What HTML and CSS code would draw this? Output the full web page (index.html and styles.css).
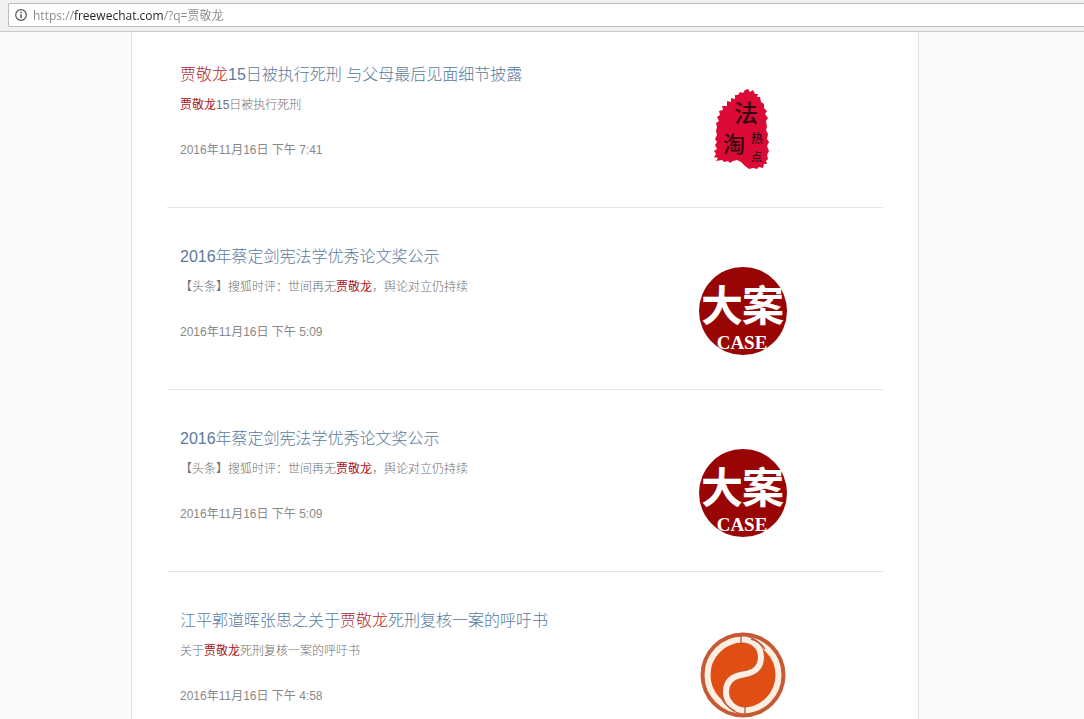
FILE: index.html
```html
<!DOCTYPE html>
<html lang="zh-CN">
<head>
<meta charset="utf-8">
<title>贾敬龙</title>
<link rel="stylesheet" href="styles.css">
</head>
<body>
<header class="toolbar">
  <label class="address">
    <svg class="info" viewBox="0 0 12 12" aria-label="网址"><circle cx="6" cy="6" r="5.3" fill="none" stroke="#555" stroke-width="1.2"/><path d="M6 5.2v3.8M6 2.8v1.4" stroke="#555" stroke-width="1.5"/></svg>
    <input class="url" type="text" value="https://freewechat.com/?q=贾敬龙">
  </label>
</header>
<div class="viewport">
<main class="panel">
  <article class="result">
    <div class="text">
      <h2 class="title"><a href="#"><em>贾敬龙</em>15日被执行死刑 与父母最后见面细节披露</a></h2>
      <p class="snippet"><em>贾敬龙</em>15日被执行死刑</p>
      <time class="date">2016年11月16日 下午 7:41</time>
    </div>
    <svg class="logo" viewBox="0 0 88 88">
      <path d="M39 10L41 7L44 8L46 5L49 4L51 7L54 5L56 9L59 9L58 12L61 12L62 17L65 19L65 23L68 26L66 29L69 33L67 36L68 42L67 45L69 49L68 54L70 57L68 61L70 66L68 70L69 74L67 76L68 79L65 79L64 83L60 82L58 84L54 83L50 84L46 81L42 77L38 75L34 76L31 78L29 76L25 77L23 75L17 76L19 73L15 72L17 69L15 66L18 64L16 60L18 57L16 54L18 50L17 46L18 42L17 38L20 36L18 32L21 30L20 26L24 25L23 21L28 21L28 16L32 17L32 13L36 14L36 10Z" fill="#dc0a36"/>
      <g class="brush"><text x="35" y="37" font-size="24">法</text><text x="24" y="67" font-size="22">淘</text><text x="52" y="58" font-size="12">热</text><text x="52" y="76" font-size="11">点</text></g>
    </svg>
  </article>
  <article class="result">
    <div class="text">
      <h2 class="title"><a href="#">2016年蔡定剑宪法学优秀论文奖公示</a></h2>
      <p class="snippet">【头条】搜狐时评：世间再无<em>贾敬龙</em>，舆论对立仍持续</p>
      <time class="date">2016年11月16日 下午 5:09</time>
    </div>
    <svg class="logo" viewBox="0 0 88 88">
      <circle cx="44" cy="44" r="44" fill="#990505"/>
      <g class="case"><text x="2" y="54" font-size="42">大</text><text x="43" y="54" font-size="42">案</text><text class="latin" x="43" y="82" font-size="19" text-anchor="middle">CASE</text></g>
    </svg>
  </article>
  <article class="result">
    <div class="text">
      <h2 class="title"><a href="#">2016年蔡定剑宪法学优秀论文奖公示</a></h2>
      <p class="snippet">【头条】搜狐时评：世间再无<em>贾敬龙</em>，舆论对立仍持续</p>
      <time class="date">2016年11月16日 下午 5:09</time>
    </div>
    <svg class="logo" viewBox="0 0 88 88">
      <circle cx="44" cy="44" r="44" fill="#990505"/>
      <g class="case"><text x="2" y="54" font-size="42">大</text><text x="43" y="54" font-size="42">案</text><text class="latin" x="43" y="82" font-size="19" text-anchor="middle">CASE</text></g>
    </svg>
  </article>
  <article class="result">
    <div class="text">
      <h2 class="title"><a href="#">江平郭道晖张思之关于<em>贾敬龙</em>死刑复核一案的呼吁书</a></h2>
      <p class="snippet">关于<em>贾敬龙</em>死刑复核一案的呼吁书</p>
      <time class="date">2016年11月16日 下午 4:58</time>
    </div>
    <svg class="logo" viewBox="0 0 88 88">
      <circle cx="44" cy="44" r="42.5" fill="#c65a35"/>
      <circle cx="44" cy="44" r="35.5" fill="#e04e14" stroke="#fdeee2" stroke-width="6"/>
      <path d="M42 8.500C54 8 62 16 62 26C62 38 54 42 44 43.500C34 45 27 50 27 61C27 71 35 79 46 79.500" fill="none" stroke="#c65a35" stroke-width="8"/>
      <path d="M42 8.500C54 8 62 16 62 26C62 38 54 42 44 43.500C34 45 27 50 27 61C27 71 35 79 46 79.500" fill="none" stroke="#fdeee2" stroke-width="6"/>
      <path d="M42 4v9M46 75v9M52 8Q60 10 66 18M22 66Q26 75 36 80" fill="none" stroke="#b45a40" stroke-width="1.300"/>
    </svg>
  </article>
</main>
</div>
</body>
</html>
```
FILE: styles.css
```css
* { box-sizing: border-box; }
body {
  margin: 0;
  height: 100vh;
  display: flex;
  flex-direction: column;
  background: #fafafa;
  font-family: "Liberation Sans", "Noto Sans CJK SC", sans-serif;
  color: #888;
}
.toolbar {
  flex: none;
  padding: 3px 0 4px 8px;
  background: #f0f0f0;
  border-bottom: 1px solid #c8c8c8;
}
.address {
  display: flex;
  align-items: center;
  gap: 6px;
  height: 24px;
  padding-left: 6px;
  background: #fff;
  border: 1px solid #bbb;
  border-right: 0;
  border-radius: 2px 0 0 2px;
}
.info { flex: none; width: 12px; height: 12px; }
.url {
  flex: 1;
  min-width: 0;
  padding: 2px 0 0;
  border: 0;
  outline: 0;
  font: 12px/20px "Open Sans", "Noto Sans CJK SC", sans-serif;
  color: transparent;
  caret-color: #222;
  background: linear-gradient(to right, #888 40px, #222 40px, #222 130px, #888 130px);
  -webkit-background-clip: text;
  background-clip: text;
}
.viewport {
  flex: 1;
  min-height: 0;
  overflow: hidden;
  padding-right: 34px;
}
.panel {
  max-width: 788px;
  margin: 0 auto;
  padding: 0 35px;
  background: #fff;
  border: solid #e2e2e2;
  border-width: 0 1px;
}
.result {
  display: flex;
  justify-content: space-between;
  gap: 24px;
  padding: 37px 96px 34px 13px;
  border-bottom: 1px solid #e5e5e5;
}
.result:first-child { padding-top: 31px; }
.text { min-width: 0; }
.title {
  margin: 0 0 8px;
  font-size: 16px;
  font-weight: 300;
  line-height: 24px;
}
.title a { color: #587a9e; text-decoration: none; }
em { font-style: normal; color: #b22a30; }
.snippet {
  margin: 0 0 25px;
  font-size: 12px;
  font-weight: 300;
  line-height: 20px;
  color: #707070;
}
.snippet em { font-weight: 400; color: #a8101a; }
.date {
  display: block;
  font-size: 12px;
  line-height: 20px;
}
.logo {
  flex: none;
  width: 88px;
  height: 88px;
  margin-top: 22px;
}
.brush {
  fill: #35060f;
  font-family: "Noto Sans CJK SC", sans-serif;
  font-weight: 500;
}
.case {
  fill: #fff;
  font-family: "Noto Sans CJK SC", sans-serif;
  font-weight: 700;
}
.latin { font-family: "Liberation Serif", serif; }
```
